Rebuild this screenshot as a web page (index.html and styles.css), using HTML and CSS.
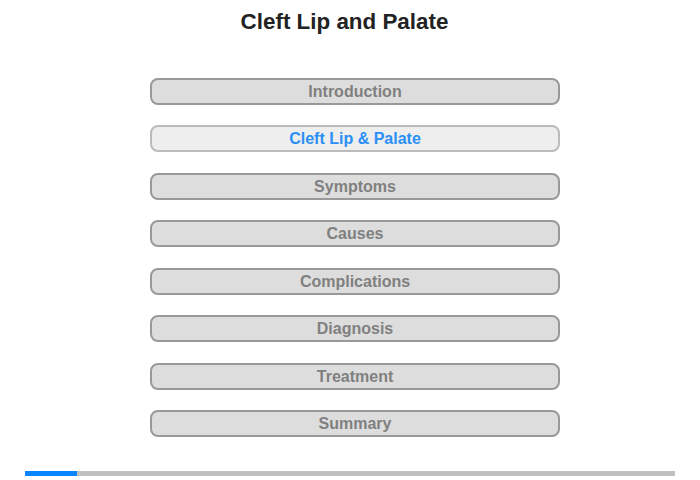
FILE: index.html
```html
<!DOCTYPE html>
<html>
<head>
<meta charset="utf-8">
<link rel="stylesheet" href="styles.css">
</head>
<body>
<div class="page">
  <h1 class="title">Cleft Lip and Palate</h1>
  <nav class="menu">
    <div class="item">Introduction</div>
    <div class="item active">Cleft Lip &amp; Palate</div>
    <div class="item">Symptoms</div>
    <div class="item">Causes</div>
    <div class="item">Complications</div>
    <div class="item">Diagnosis</div>
    <div class="item">Treatment</div>
    <div class="item">Summary</div>
  </nav>
  <div class="progress"><div class="progress-fill" style="width:52px"></div></div>
</div>
</body>
</html>
```
FILE: styles.css
```css
html, body {
  margin: 0;
  padding: 0;
  background: #fff;
}
body {
  font-family: "Liberation Sans", Arial, sans-serif;
  width: 700px;
  height: 480px;
  overflow: hidden;
}
.page {
  display: flex;
  flex-direction: column;
  align-items: center;
}
.title {
  margin: 9px 0 0;
  padding-right: 11px;
  height: 26px;
  line-height: 26px;
  font-size: 22.4px;
  font-weight: bold;
  color: #222;
  text-align: center;
}
.menu {
  margin-top: 42.5px;
  margin-left: 10px;
  display: flex;
  flex-direction: column;
  gap: 20.5px;
  width: 410px;
}
.item {
  box-sizing: border-box;
  height: 27px;
  border: 2px solid #999;
  border-radius: 8px;
  background: #ddd;
  color: #808080;
  font-size: 16px;
  font-weight: bold;
  line-height: 23px;
  text-align: center;
}
.item.active {
  background: #eee;
  border-color: #bbb;
  color: #2b8ff5;
}
.progress {
  margin-top: 34px;
  width: 650px;
  height: 5px;
  background: #c0c0c0;
}
.progress-fill {
  height: 100%;
  background: #0a84ff;
}
```
